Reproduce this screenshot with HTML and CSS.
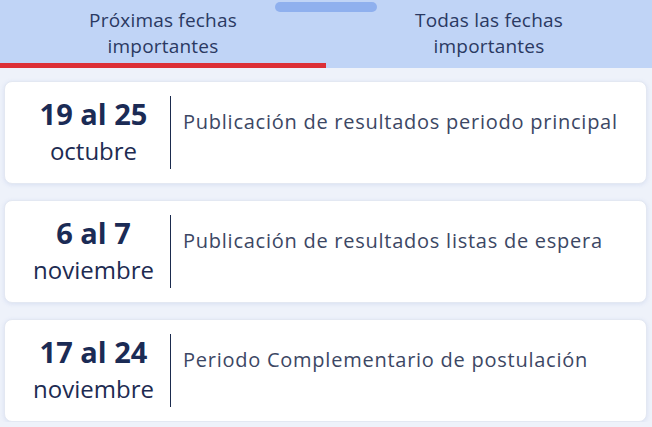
FILE: index.html
```html
<!DOCTYPE html>
<html lang="es">
<head>
    <meta charset="UTF-8">
    <meta name="viewport" content="width=device-width, initial-scale=1.0">
    <title>Fechas importantes</title>
    <link rel="stylesheet" href="styles.css">
</head>
<body>

    <div class="tabs">
        <span class="handle"></span>
        <div class="tab active">Próximas fechas<br>importantes</div>
        <div class="tab">Todas las fechas<br>importantes</div>
    </div>

    <div class="list">
        <div class="card">
            <div class="date">
                <div class="days">19 al 25</div>
                <div class="month">octubre</div>
            </div>
            <div class="desc">Publicación de resultados periodo principal</div>
        </div>

        <div class="card">
            <div class="date">
                <div class="days">6 al 7</div>
                <div class="month">noviembre</div>
            </div>
            <div class="desc">Publicación de resultados listas de espera</div>
        </div>

        <div class="card">
            <div class="date">
                <div class="days">17 al 24</div>
                <div class="month">noviembre</div>
            </div>
            <div class="desc">Periodo Complementario de postulación</div>
        </div>
    </div>

</body>
</html>
```

FILE: styles.css
```css
body {
    margin: 0;
    font-family: "Open Sans", "Noto Sans", sans-serif;
    background-color: #eef2fa;
    color: #1d2b52;
}

.tabs {
    position: relative;
    display: flex;
    height: 68px;
    background-color: #c0d4f6;
}

.handle {
    position: absolute;
    top: 2px;
    left: 275px;
    width: 102px;
    height: 10px;
    border-radius: 5px;
    background-color: #8fb0ee;
}

.tab {
    flex: 1;
    padding-top: 7px;
    box-sizing: border-box;
    text-align: center;
    font-size: 19px;
    letter-spacing: 0.2px;
    line-height: 26px;
    color: #2a3962;
}

.tab.active {
    border-bottom: 5px solid #dc2f36;
}

.list {
    display: flex;
    flex-direction: column;
    gap: 16px;
    padding: 13px 5px 0 4px;
}

.card {
    display: flex;
    align-items: flex-start;
    height: 103px;
    padding: 14px 0;
    box-sizing: border-box;
    background-color: #fff;
    border: 1px solid #e3e8f2;
    border-radius: 8px;
    box-shadow: 0 1px 4px rgba(120, 145, 210, 0.18);
}

.date {
    width: 153px;
    margin-left: 12px;
    text-align: center;
}

.days {
    font-size: 29px;
    font-weight: 700;
    line-height: 36px;
    color: #1b2b55;
}

.month {
    font-size: 24px;
    line-height: 38px;
    color: #1d2b52;
}

.desc {
    align-self: stretch;
    padding: 12px 0 0 12px;
    border-left: 1.5px solid #1b2b4e;
    font-size: 20px;
    letter-spacing: 0.75px;
    line-height: 28px;
    color: #3c4764;
}
```
